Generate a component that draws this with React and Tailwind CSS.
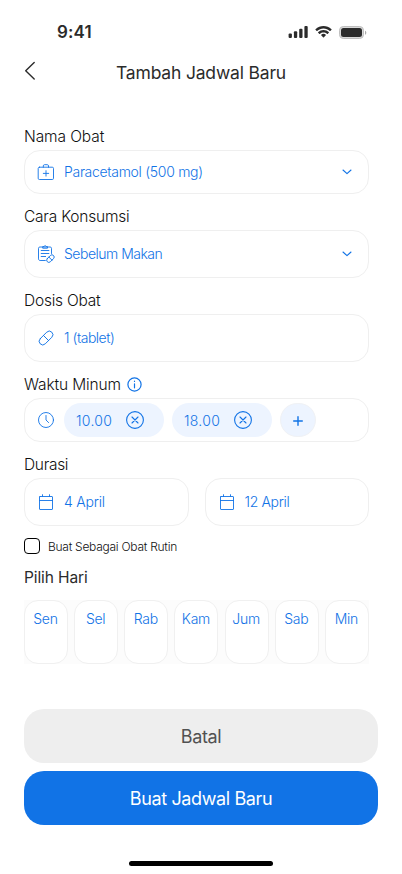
import React from 'react';

const days = ['Sen', 'Sel', 'Rab', 'Kam', 'Jum', 'Sab', 'Min'];

function Icon({ children, className = 'h-[18px] w-[18px]', sw = 0.9, box = '0 0 18 18' }) {
  return (
    <svg className={'shrink-0 ' + className} viewBox={box} fill="none" stroke="currentColor" strokeWidth={sw} strokeLinecap="round" strokeLinejoin="round">
      {children}
    </svg>
  );
}

function KitIcon() {
  return (
    <Icon>
      <rect x="1.2" y="4.2" width="15.3" height="12.3" rx="1.2" />
      <path d="M6.3 4.2V2.9c0-.7.4-1.2 1.1-1.2h3c.7 0 1.1.5 1.1 1.2v1.3M9 7.7v5.4M6.3 10.4h5.4" />
    </Icon>
  );
}

function NoteIcon() {
  return (
    <Icon>
      <path d="M8.3 15.5H3.1c-.9 0-1.6-.7-1.6-1.6V3.3c0-.7.5-1.3 1.3-1.3h10.4c.8 0 1.3.6 1.3 1.3v5.2M5.7 2.8V1.6h1.4C7.3.9 7.7.6 8.1.6s.8.3 1 1h1.4v1.2zM4.2 5.5h7.7M4.2 8.5h7.7M4.2 11.5h4.4" />
      <g transform="rotate(-45 13.4 13.6)">
        <rect x="9" y="11.4" width="8.8" height="4.4" rx="2.2" />
        <path d="M13.4 11.4v4.4" />
      </g>
    </Icon>
  );
}

function PillIcon() {
  return (
    <Icon>
      <g transform="rotate(-45 9 9)">
        <rect x="0.8" y="5.4" width="16.4" height="7.2" rx="3.6" />
        <path d="M9 5.4v7.2" />
      </g>
    </Icon>
  );
}

function ClockIcon() {
  return (
    <Icon>
      <circle cx="9" cy="9" r="7.5" />
      <path d="M9 4.5V9l2.6 2.6" />
    </Icon>
  );
}

function CalendarIcon() {
  return (
    <Icon>
      <rect x="2.5" y="3.5" width="13" height="13" rx="0.5" />
      <path d="M2.5 7.5h13M5.5 1.7v1.8M12.5 1.7v1.8" />
    </Icon>
  );
}

function Chevron() {
  return (
    <Icon className="ml-auto h-[10px] w-[10px]" box="0 0 10 10" sw={1.1}>
      <path d="M1 3l4 3.7L9 3" />
    </Icon>
  );
}

function Label({ children, className = 'tracking-[-0.22px]' }) {
  return (
    <div className="flex h-9 items-end">
      <div className={'flex h-[27px] items-center text-[15.5px] font-light text-[#111] ' + className}>{children}</div>
    </div>
  );
}

function Field({ className = 'h-12', children }) {
  return (
    <div className={'flex items-center rounded-[16px] border border-[#efefef] bg-white pl-[12px] pr-[16px] text-[#1173e6] ' + className}>
      {children}
    </div>
  );
}

function Value({ children, className }) {
  return <span className={'mb-[2px] ml-[9px] whitespace-nowrap text-[14px] font-light ' + className}>{children}</span>;
}

function TimeChip({ time }) {
  return (
    <div className="flex h-[34px] w-[100px] shrink-0 items-center rounded-full bg-[#edf4ff] pl-[12px]">
      <span className="w-[50px] whitespace-nowrap text-[14px] font-light tracking-[0.3px]">{time}</span>
      <Icon className="h-[18px] w-[18px]" sw={1.1}>
        <circle cx="9" cy="9" r="8.4" />
        <path d="M6 6l6 6M12 6l-6 6" />
      </Icon>
    </div>
  );
}

function StatusBar() {
  return (
    <div className="flex h-[44px] items-end justify-between pl-[57px] pr-[35px] text-[#2b2b2b]">
      <span className="h-6 text-[17px] font-semibold leading-6 tracking-[0.1px]">9:41</span>
      <div className="flex h-6 items-center gap-[7px]">
        <svg className="h-3 w-5" viewBox="0 0 20 12" fill="currentColor">
          <rect x="0.6" y="7.5" width="3.3" height="4.5" rx="1" />
          <rect x="5.9" y="5.2" width="3.3" height="6.8" rx="1" />
          <rect x="11.2" y="2.7" width="3.3" height="9.3" rx="1" />
          <rect x="16.4" y="0" width="3.3" height="12" rx="1" />
        </svg>
        <svg className="h-3 w-[17px]" viewBox="0 0 17 12" fill="currentColor">
          <path d="M8.5 2.5c2.4 0 4.6.9 6.3 2.5.1.1.3.1.5 0l1.2-1.2c.2-.2.2-.4 0-.5C12-1 5-1 .5 3.3c-.2.1-.2.3 0 .5L1.7 5c.2.1.4.1.5 0 1.7-1.6 3.9-2.5 6.3-2.5zm0 4c1.3 0 2.6.5 3.6 1.4.1.1.3.1.5 0l1.2-1.2c.2-.2.2-.4 0-.6a7.7 7.7 0 0 0-10.6 0c-.2.2-.2.4 0 .6l1.2 1.2c.2.1.4.1.5 0 1-.9 2.3-1.4 3.6-1.4zm2.3 2.8c.2-.2.2-.4 0-.6a3.8 3.8 0 0 0-4.6 0c-.2.2-.2.4 0 .6l2.1 2.1c.1.1.3.1.4 0z" />
        </svg>
        <svg className="h-[13px] w-[28px]" viewBox="0 0 28 13" fill="currentColor">
          <rect x="0.5" y="0.5" width="24" height="12" rx="3.8" fill="#d9d9d9" stroke="#bfbfbf" />
          <path d="M26 4.7v4c.8-.3 1.3-1.1 1.3-2s-.5-1.7-1.3-2z" opacity="0.4" />
          <rect x="2" y="2" width="21" height="9" rx="2.5" />
        </svg>
      </div>
    </div>
  );
}

export default function App() {
  return (
    <main className="flex h-[874px] w-[402px] flex-col overflow-hidden bg-white font-['Inter','Liberation_Sans',sans-serif]">
      <StatusBar />
      <header className="flex h-[56px] items-center px-6">
        <svg className="mb-[2px] h-[20px] w-[12px]" viewBox="0 0 12 20" fill="none" stroke="#2b2b2b" strokeWidth="1.4" strokeLinecap="round" strokeLinejoin="round">
          <path d="M10.2 1.5L1.7 9.7l8.5 8.3" />
        </svg>
        <h1 className="grow pr-[12px] pt-[2px] text-center text-[17.5px] font-normal tracking-[-0.18px] text-[#2b2b2b]">Tambah Jadwal Baru</h1>
      </header>

      <section className="ml-6 mt-[14px] w-[345px]">
        <Label className="tracking-[-0.1px]"><span>Nama Obat</span></Label>
        <Field className="h-11"><KitIcon /><Value className="tracking-[-0.3px]">Paracetamol (500 mg)</Value><Chevron /></Field>
        <Label><span>Cara Konsumsi</span></Label>
        <Field><NoteIcon /><Value className="tracking-[-0.5px]">Sebelum Makan</Value><Chevron /></Field>
        <Label><span>Dosis Obat</span></Label>
        <Field><PillIcon /><Value className="tracking-[-0.48px]">1 (tablet)</Value></Field>
        <Label className="tracking-[-0.14px]">
          <span>Waktu Minum</span>
          <Icon className="ml-[6px] h-[15px] w-[15px] text-[#1173e6]" box="0 0 15 15" sw={1.2}>
            <circle cx="7.5" cy="7.5" r="6.6" />
            <path d="M7.5 6.8v4M7.5 4.2v.3" />
          </Icon>
        </Label>
        <Field className="h-11">
          <ClockIcon />
          <div className="ml-[9px] flex gap-2">
            <TimeChip time="10.00" />
            <TimeChip time="18.00" />
            <div className="flex h-[34px] w-9 items-center justify-center rounded-full border border-[#f0f2f5] bg-[#edf4ff]">
              <Icon className="mt-px h-[10px] w-[10px]" box="0 0 10 10" sw={1.4}><path d="M5 .7v8.6M.7 5h8.6" /></Icon>
            </div>
          </div>
        </Field>
        <Label className="tracking-[-0.3px]"><span>Durasi</span></Label>
        <div className="grid grid-cols-2 gap-4">
          <Field><CalendarIcon /><Value className="tracking-[-0.2px]">4 April</Value></Field>
          <Field><CalendarIcon /><Value className="tracking-[-0.35px]">12 April</Value></Field>
        </div>
        <div className="mt-3 flex h-4 items-center">
          <span className="h-4 w-4 rounded-[4px] border border-black" />
          <span className="ml-2 mt-[2px] text-[12px] font-light tracking-[-0.26px] text-[#111]">Buat Sebagai Obat Rutin</span>
        </div>
        <h2 className="mt-3 h-6 text-[15.5px] font-normal leading-6 tracking-[-0.1px] text-[#2b2b2b]"><span>Pilih Hari</span></h2>
        <div className="mt-[10px] flex h-16 justify-between bg-[#fcfcfc]">
          {days.map((day) => (
            <div key={day} className="w-11 rounded-[14px] border border-[#f0f0f0] bg-white pr-[1px] pt-[8px] text-center text-[14px] font-light leading-5 tracking-[-0.25px] text-[#1173e6]">{day}</div>
          ))}
        </div>
      </section>

      <div className="mx-6 mt-[45px] flex flex-col gap-2">
        <button className="h-[54px] rounded-[20px] bg-[#eeeeee] text-[18px] tracking-[-0.4px] text-[#515151]">Batal</button>
        <button className="h-[54px] rounded-[20px] bg-[#1173e6] text-[18px] tracking-[-0.38px] text-white">Buat Jadwal Baru</button>
      </div>
      <div className="mx-auto mt-9 h-[5px] w-36 rounded-full bg-black" />
    </main>
  );
}
